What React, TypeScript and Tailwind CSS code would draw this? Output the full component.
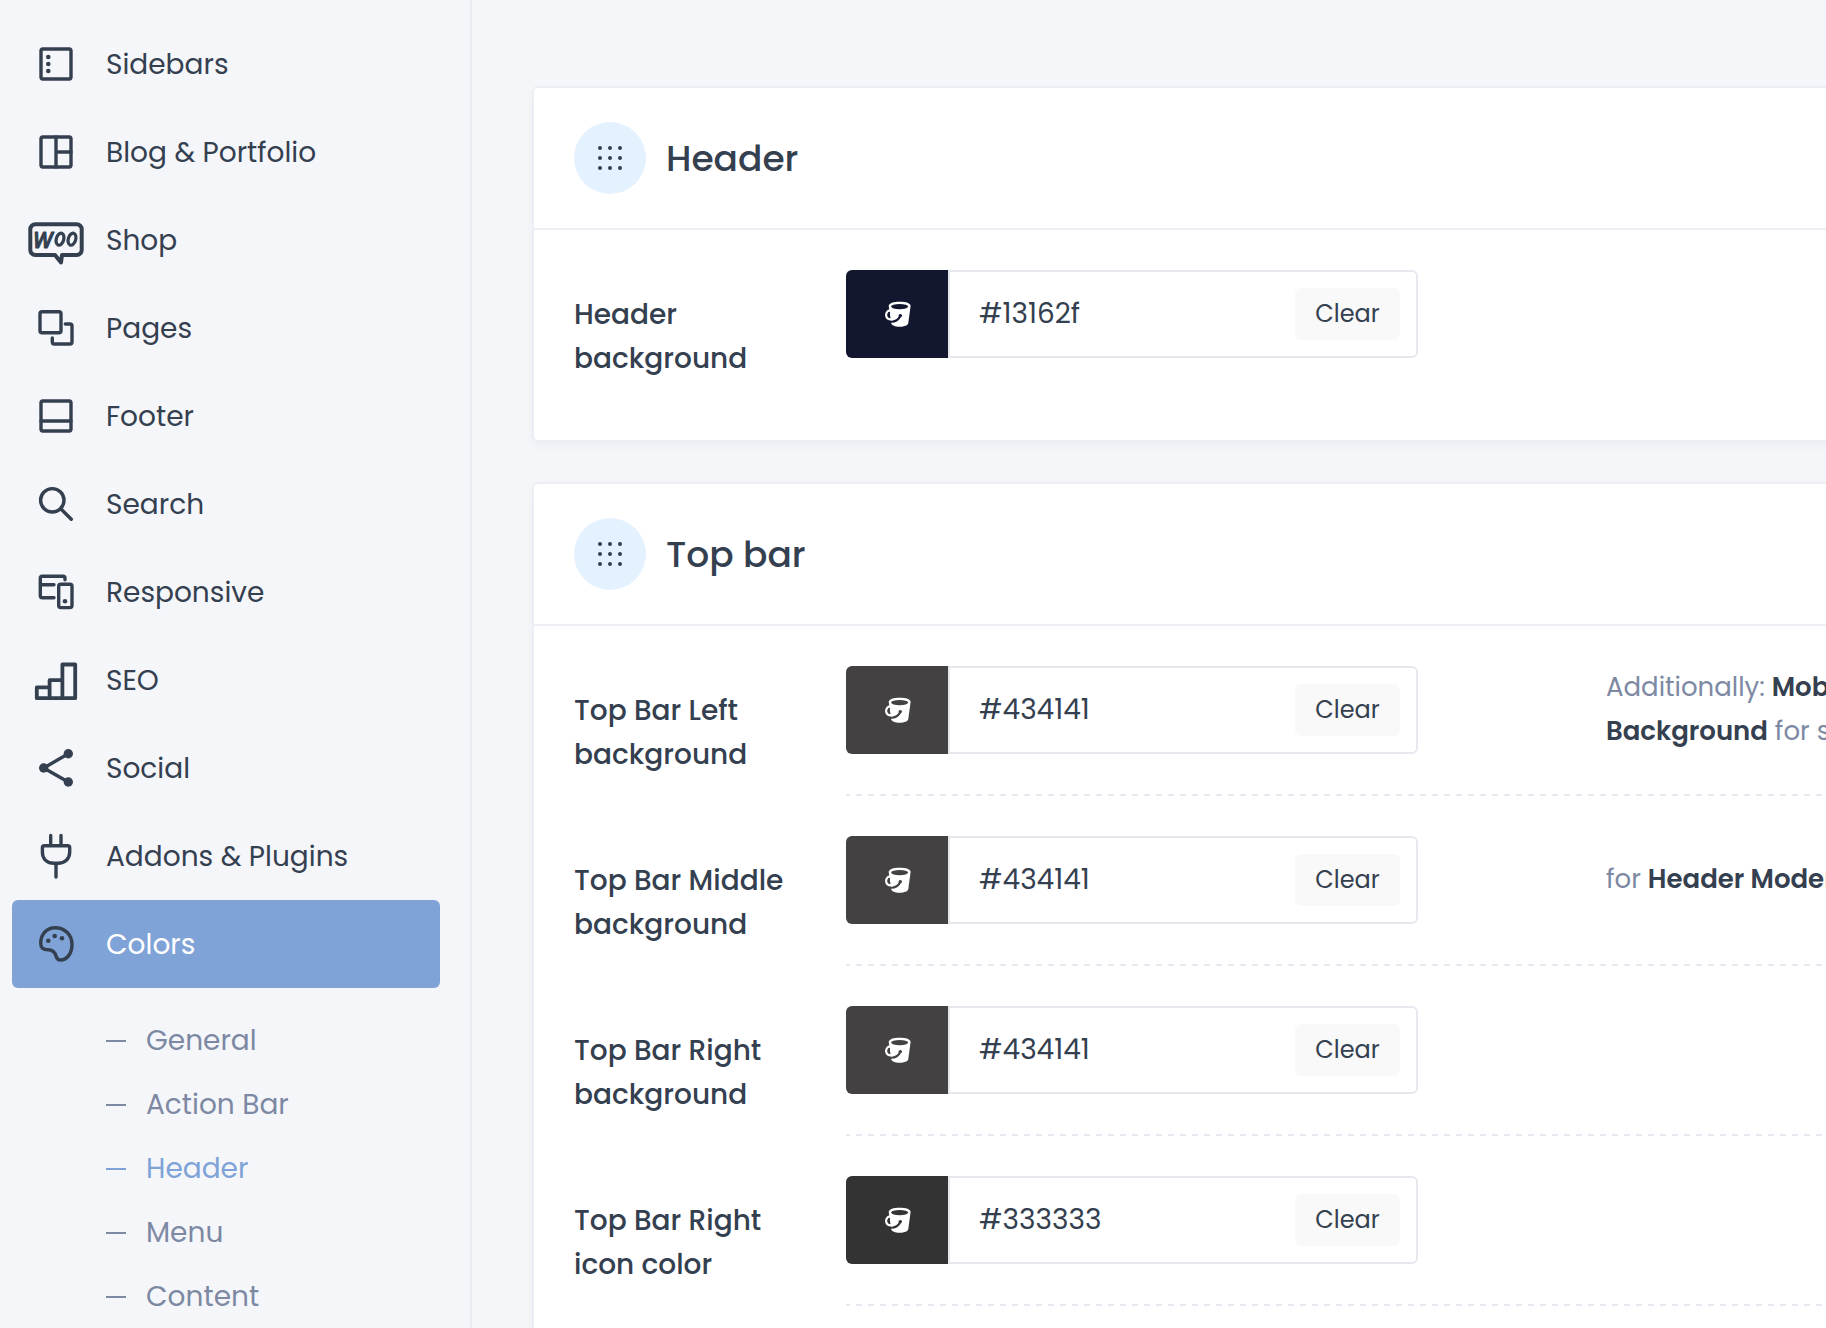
import React from "react";

const iconProps = {
  viewBox: "0 0 56 56",
  className: "size-14 shrink-0",
  fill: "none",
  stroke: "#34404f",
  strokeWidth: 3.4,
  strokeLinecap: "round" as const,
  strokeLinejoin: "round" as const,
  "aria-hidden": true,
};

function Dot({ x, y, r = 2.3 }: { x: number; y: number; r?: number }) {
  return <circle cx={x} cy={y} r={r} fill="#34404f" stroke="none" />;
}

const icons: Record<string, React.ReactNode> = {
  sidebars: (
    <>
      <rect x="13" y="13" width="30" height="30" rx="2" />
      <Dot x={20.3} y={21} />
      <Dot x={20.3} y={28} />
      <Dot x={20.3} y={35} />
    </>
  ),
  blog: (
    <>
      <rect x="13" y="13" width="30" height="30" rx="2" />
      <path d="M28 13V43M28 28H43" />
    </>
  ),
  shop: (
    <>
      <path
        strokeWidth="4"
        d="M7.3 12.3H48.7a5 5 0 0 1 5 5V38a5 5 0 0 1-5 5H34L33 50.5L27 43H7.3a5 5 0 0 1-5-5V17.3a5 5 0 0 1 5-5Z"
      />
      <text
        x="5"
        y="35.5"
        fill="#34404f"
        strokeWidth="1"
        className="font-['Open_Sans'] text-[22px] font-semibold italic"
      >
        W
      </text>
      <ellipse cx="32" cy="27.2" rx="3.7" ry="6.2" strokeWidth="3.2" transform="rotate(16 32 27.2)" />
      <ellipse cx="44" cy="27.2" rx="3.7" ry="6.2" strokeWidth="3.2" transform="rotate(16 44 27.2)" />
    </>
  ),
  pages: (
    <>
      <rect x="12" y="11.7" width="21" height="21" rx="2" />
      <path d="M37.3 24H42a2 2 0 0 1 2 2V42a2 2 0 0 1-2 2H26.3a2 2 0 0 1-2-2V38" />
    </>
  ),
  footer: (
    <>
      <rect x="13" y="13" width="30" height="30" rx="2" />
      <path d="M13 33H43" />
    </>
  ),
  search: (
    <>
      <circle cx="24.3" cy="24.3" r="11.7" />
      <path d="M33 33L43.3 43.3" />
    </>
  ),
  responsive: (
    <>
      <path d="M37 15.8V14.3a2 2 0 0 0-2-2H14.3a2 2 0 0 0-2 2V31.7a2 2 0 0 0 2 2H26M12.3 20.7H26" />
      <rect x="30.7" y="20.3" width="13.3" height="23.3" rx="2" />
      <Dot x={37} y={37.3} />
    </>
  ),
  seo: (
    <path
      strokeWidth="3.8"
      d="M8.8 35.4H21.6V46.2H8.8ZM21.6 28.2H34.4V46.2H21.6ZM34.4 12.5H47.2V46.2H34.4Z"
    />
  ),
  social: (
    <>
      <path d="M40.3 13.7L15.7 28L40.3 42" />
      <Dot x={15.7} y={28} r={4.7} />
      <Dot x={40.3} y={13.7} r={4.7} />
      <Dot x={40.3} y={42} r={4.7} />
    </>
  ),
  plug: (
    <path d="M22.7 7.5V17M33 7.5V17M28 35.3V49M16.4 17.7H39.7a2 2 0 0 1 2 2V24C41.7 31 36.7 35.3 30 35.3H26C19 35.3 14.4 31 14.4 24V19.7a2 2 0 0 1 2-2Z" />
  ),
  palette: (
    <>
      <path d="M12.7 27C12.7 18 19 11.7 27 11.7C37 11.7 44 19 44 28.5C44 37.5 39 44 32.5 44C30 44 28.8 43 28.2 40.5C27 36 24.5 33.7 20 33.7C15 33.7 12.7 32 12.7 27Z" />
      <Dot x={20.3} y={24.7} />
      <Dot x={26.7} y={20} />
      <Dot x={34} y={22.3} />
    </>
  ),
};

const navItems = [
  { label: "Sidebars", icon: "sidebars" },
  { label: "Blog & Portfolio", icon: "blog" },
  { label: "Shop", icon: "shop" },
  { label: "Pages", icon: "pages" },
  { label: "Footer", icon: "footer" },
  { label: "Search", icon: "search" },
  { label: "Responsive", icon: "responsive" },
  { label: "SEO", icon: "seo" },
  { label: "Social", icon: "social" },
  { label: "Addons & Plugins", icon: "plug" },
  { label: "Colors", icon: "palette", active: true },
];

const subItems = ["General", "Action Bar", "Header", "Menu", "Content"];

function Sidebar() {
  return (
    <aside className="w-[472px] shrink-0 border-r-2 border-[#e9ebf2] pt-5 pr-[30px] pl-3">
      <nav>
        <ul>
          {navItems.map((item) => (
            <li key={item.label}>
              <a
                href="#"
                className={
                  item.active
                    ? "flex h-[88px] items-center gap-[22px] rounded-md bg-[#7fa3d6] pl-4 text-white"
                    : "flex h-[88px] items-center gap-[22px] rounded-md pl-4"
                }
              >
                <svg {...iconProps}>{icons[item.icon]}</svg>
                <span className="pt-0.5">{item.label}</span>
              </a>
            </li>
          ))}
        </ul>
        <ul className="pt-[21px] pl-[94px]">
          {subItems.map((label) => (
            <li key={label}>
              <a
                href="#"
                className={
                  label === "Header"
                    ? "flex h-16 items-center gap-5 text-[#7fa3d6]"
                    : "flex h-16 items-center gap-5 text-[#7d89a3]"
                }
              >
                <span className="h-0.5 w-5 bg-current" />
                {label}
              </a>
            </li>
          ))}
        </ul>
      </nav>
    </aside>
  );
}

function Bucket({ shade }: { shade: string }) {
  return (
    <svg viewBox="0 0 28 28" className="size-7" fill="none" strokeLinecap="round" aria-hidden="true">
      <path
        fill="#fff"
        d="M5.700 6C5.700 3.200 10.500 1.700 16.700 1.700S27.700 3.200 27.600 6L25.300 23C25 25.200 21.500 26.700 16.500 26.700C12 26.700 8.700 25.500 8.200 23.200Z"
      />
      <ellipse cx="16.600" cy="6.600" rx="8.500" ry="2.700" fill={shade} />
      <path stroke={shade} strokeWidth="2.200" d="M17.300 16C15.500 19.800 12 21.900 7.500 21.700" />
      <circle cx="17.300" cy="15.600" r="1.700" fill={shade} />
      <path stroke="#fff" strokeWidth="2.300" d="M7 10.300C4.300 11 3.100 13 3.200 15.300C3.400 18 5.500 19.700 9 19.300" />
      <path stroke={shade} strokeWidth="1.800" d="M6.200 12.800C5.300 14 5.300 15.800 6.300 17" />
    </svg>
  );
}

type Field = { label: string[]; value: string; note?: React.ReactNode };

function ColorField({ label, value, note }: Field) {
  const id = label.join("-").toLowerCase().replaceAll(" ", "-");
  return (
    <div className="group flex pl-10">
      <label htmlFor={id} className="w-[272px] shrink-0 pt-[63px] leading-[44px] font-medium">
        {label.map((line) => (
          <span key={line} className="block">
            {line}
          </span>
        ))}
      </label>
      <div className="flex-1">
        <div className="flex items-center py-10">
          <div className="flex h-[88px] w-[572px] shrink-0">
            <button
              type="button"
              aria-label="Pick a color"
              className="flex w-[102px] items-center justify-center rounded-l-md"
              style={{ backgroundColor: value }}
            >
              <Bucket shade={value} />
            </button>
            <div className="flex min-w-0 flex-1 items-center rounded-r-md border-2 border-[#e5e8ed] pr-4 pl-[29px]">
              <input id={id} type="text" defaultValue={value} className="min-w-0 flex-1 outline-none" />
              <button type="button" className="h-[52px] w-[105px] rounded-md bg-[#f9f9f9] text-2xl">
                Clear
              </button>
            </div>
          </div>
          {note && (
            <p className="-mt-0.5 pl-[188px] text-[26px] leading-[44px] whitespace-nowrap text-[#7d89a3]">{note}</p>
          )}
        </div>
        <div className="h-0.5 bg-[repeating-linear-gradient(90deg,#e6e8f2_0_4px,transparent_4px_10px,#e6e8f2_10px_12px)] group-last:invisible" />
      </div>
    </div>
  );
}

function Card({ title, fields }: { title: string; fields: Field[] }) {
  return (
    <section className="-mr-4 rounded-md border-2 border-[#edeef4] bg-white pb-10 shadow-[0_4px_10px_rgba(30,40,70,0.04)]">
      <header className="flex h-[142px] items-center gap-5 border-b-2 border-[#edeef4] px-10">
        <span className="flex size-[72px] items-center justify-center rounded-full bg-[#e4f1fe]">
          <svg viewBox="0 0 24 24" className="size-6" fill="#34404f" aria-hidden="true">
            {[2, 12, 22].map((y) => [2, 12, 22].map((x) => <circle key={x + "-" + y} cx={x} cy={y} r="2" />))}
          </svg>
        </span>
        <h2 className="pt-0.5 text-4xl font-medium">{title}</h2>
      </header>
      <div>
        {fields.map((field) => (
          <ColorField key={field.label.join(" ")} {...field} />
        ))}
      </div>
    </section>
  );
}

const headerFields: Field[] = [{ label: ["Header", "background"], value: "#13162f" }];

const topBarFields: Field[] = [
  {
    label: ["Top Bar Left", "background"],
    value: "#434141",
    note: (
      <>
        Additionally: <b className="font-semibold text-[#34404f]">Mobile</b>
        <br />
        <b className="font-semibold text-[#34404f]">Background</b> for small
      </>
    ),
  },
  {
    label: ["Top Bar Middle", "background"],
    value: "#434141",
    note: (
      <>
        for <b className="font-semibold text-[#34404f]">Header Modern</b>
      </>
    ),
  },
  { label: ["Top Bar Right", "background"], value: "#434141" },
  { label: ["Top Bar Right", "icon color"], value: "#333333" },
  { label: ["Top Bar Right", "text color"], value: "#333333" },
];

export default function App() {
  return (
    <div className="flex h-screen overflow-hidden bg-[#f5f6fa] font-[Poppins,Inter,sans-serif] text-[28px] text-[#34404f]">
      <Sidebar />
      <main className="flex min-w-0 flex-1 flex-col gap-10 overflow-hidden pt-[86px] pl-[60px]">
        <Card title="Header" fields={headerFields} />
        <Card title="Top bar" fields={topBarFields} />
      </main>
    </div>
  );
}
